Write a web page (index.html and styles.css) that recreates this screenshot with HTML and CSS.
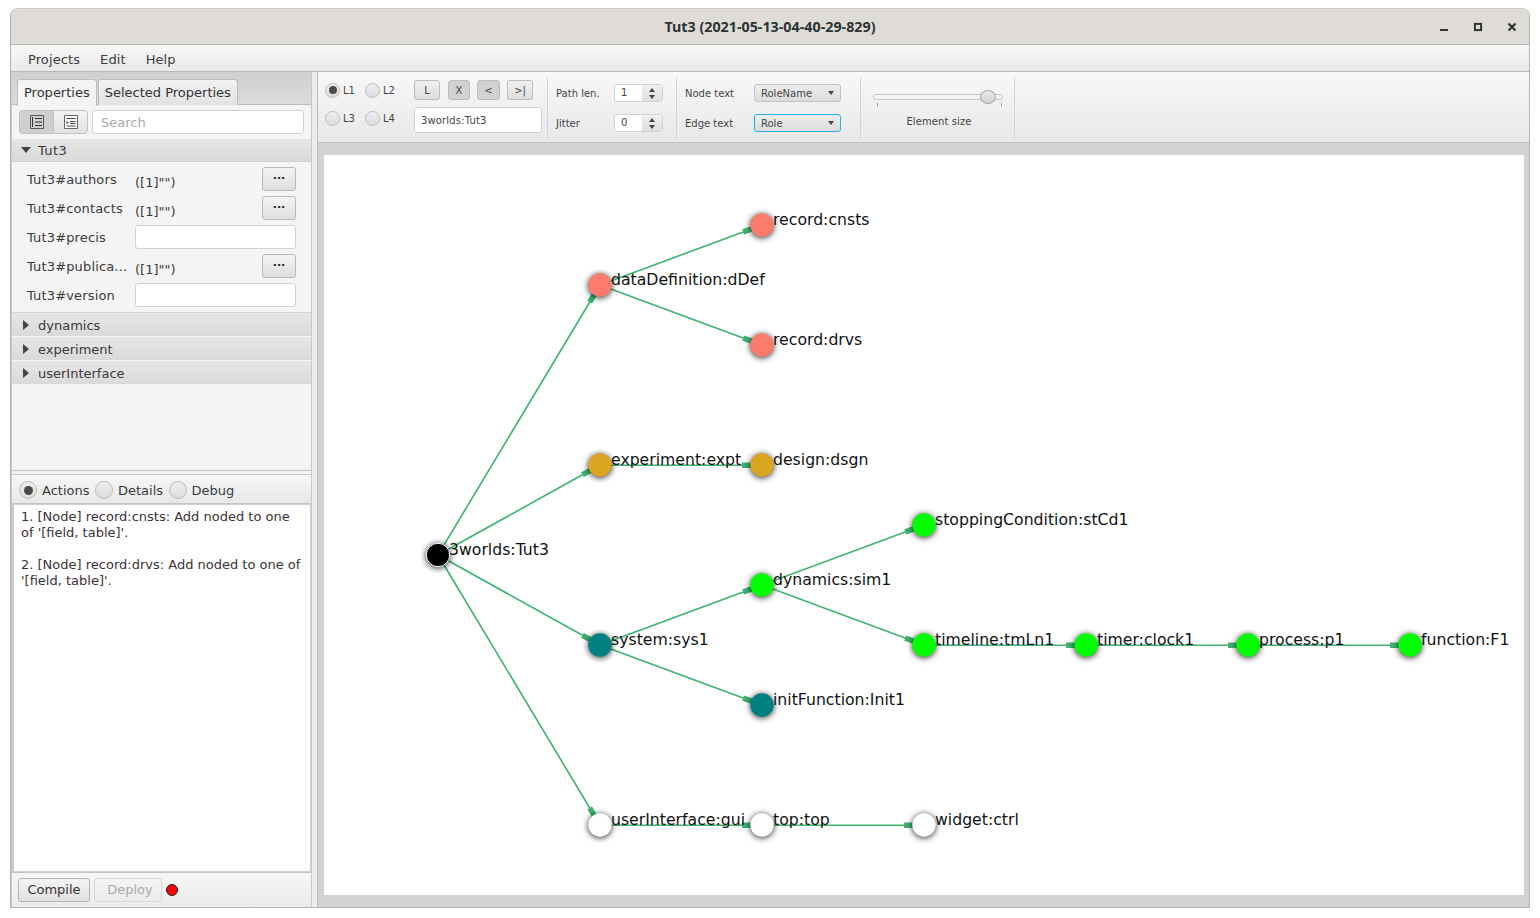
FILE: index.html
```html
<!DOCTYPE html>
<html lang="en">
  <head>
    <meta charset="UTF-8" />
    <title>Tut3</title>
    <link rel="stylesheet" href="styles.css">
  </head>
  <body>
    <div class="window">
      <div class="titlebar">
        <span class="title">Tut3 (2021-05-13-04-40-29-829)</span>
        <div class="win-buttons">
          <svg width="10" height="10" viewBox="0 0 10 10"><rect x="1" y="7" width="8" height="2" fill="#2e3436"/></svg>
          <svg width="10" height="10" viewBox="0 0 10 10"><rect x="1.9" y="1.9" width="6.2" height="6.2" fill="none" stroke="#2e3436" stroke-width="2"/></svg>
          <svg width="10" height="10" viewBox="0 0 10 10"><path d="M1.5 1.5L8.5 8.5M8.5 1.5L1.5 8.5" stroke="#2e3436" stroke-width="2.2"/></svg>
        </div>
      </div>

      <div class="menubar">
        <span>Projects</span>
        <span>Edit</span>
        <span>Help</span>
      </div>

      <div class="main">
        <!-- Left side -->
        <div class="left">
          <div class="top-pane">
            <div class="tabs">
              <div class="tab active">Properties</div>
              <div class="tab">Selected Properties</div>
            </div>
            <div class="sheet-tools">
              <div class="toggle-group">
                <div class="toggle pressed">
                  <svg width="16" height="16" viewBox="0 0 16 16"><path d="M1.500 1.500h13v13h-13z" fill="none" stroke="#555"/><path d="M6 4.500h7M6 8h7M6 11.500h7M3.500 3v10" stroke="#333" fill="none"/></svg>
                </div>
                <div class="toggle">
                  <svg width="16" height="16" viewBox="0 0 16 16"><path d="M1.500 1.500h13v13h-13z" fill="#fff" stroke="#666"/><path d="M3.500 4.500h9M7 7.500h5.500M7 9.500h5.500M3.500 12h9" stroke="#444" fill="none"/><path d="M3.500 7l2.500 1.500-2.500 1.500z" fill="#444"/></svg>
                </div>
              </div>
              <div class="search">Search</div>
            </div>

            <div class="section-head"><span class="arrow-down"></span><span class="section-name">Tut3</span></div>
            <div class="props">
              <div class="prop"><span class="prop-name">Tut3#authors</span><span class="prop-value">([1]"")</span><span class="dots">···</span></div>
              <div class="prop"><span class="prop-name">Tut3#contacts</span><span class="prop-value">([1]"")</span><span class="dots">···</span></div>
              <div class="prop"><span class="prop-name">Tut3#precis</span><span class="prop-input"></span></div>
              <div class="prop"><span class="prop-name">Tut3#publica...</span><span class="prop-value">([1]"")</span><span class="dots">···</span></div>
              <div class="prop"><span class="prop-name">Tut3#version</span><span class="prop-input"></span></div>
            </div>
            <div class="section-head closed"><span class="arrow-right"></span>dynamics</div>
            <div class="section-head closed"><span class="arrow-right"></span>experiment</div>
            <div class="section-head closed"><span class="arrow-right"></span>userInterface</div>
          </div>

          <div class="h-divider"></div>

          <div class="bottom-pane">
            <div class="log-tabs">
              <span class="radio big on"></span><span class="log-label">Actions</span>
              <span class="radio big"></span><span class="log-label">Details</span>
              <span class="radio big"></span><span class="log-label">Debug</span>
            </div>
            <div class="log">
              <p>1. [Node] record:cnsts: Add noded to one of '[field, table]'.</p>
              <p>2. [Node] record:drvs: Add noded to one of '[field, table]'.</p>
            </div>
            <div class="actions">
              <span class="btn">Compile</span>
              <span class="btn disabled">Deploy</span>
              <span class="lamp"></span>
            </div>
          </div>
        </div>

        <div class="v-divider"></div>

        <!-- Right side -->
        <div class="right">
          <div class="toolbar">
            <div class="group group-layout">
              <div class="radios">
                <span class="radio-item"><span class="radio on"></span>L1</span>
                <span class="radio-item"><span class="radio"></span>L2</span>
                <span class="radio-item"><span class="radio"></span>L3</span>
                <span class="radio-item"><span class="radio"></span>L4</span>
              </div>
              <div class="layout-tools">
                <div class="small-btns">
                  <span class="sbtn w26">L</span>
                  <span class="sbtn w22 down">X</span>
                  <span class="sbtn w23 down">&lt;</span>
                  <span class="sbtn w26">&gt;|</span>
                </div>
                <div class="root-field">3worlds:Tut3</div>
              </div>
            </div>
            <div class="group group-spin">
              <div class="field-row"><span class="field-label w58">Path len.</span><span class="spinner"><span class="spin-value">1</span><span class="spin-arrows"><i class="up"></i><i class="dn"></i></span></span></div>
              <div class="field-row"><span class="field-label w58">Jitter</span><span class="spinner"><span class="spin-value">0</span><span class="spin-arrows"><i class="up"></i><i class="dn"></i></span></span></div>
            </div>
            <div class="group group-combo">
              <div class="field-row"><span class="field-label w69">Node text</span><span class="combo">RoleName<i class="dn"></i></span></div>
              <div class="field-row"><span class="field-label w69">Edge text</span><span class="combo focus">Role<i class="dn"></i></span></div>
            </div>
            <div class="group group-slider">
              <div class="slider"><span class="thumb"></span><span class="tick tick-a"></span><span class="tick tick-b"></span></div>
              <div class="slider-label">Element size</div>
            </div>
          </div>

          <div class="canvas-area">
            <svg class="graph" width="1200" height="740" viewBox="324 155 1200 740">
              <g class="edges">
                <path d="M438 555L600 285M600 285L762 225M600 285L762 345M438 555L600 465M600 465.200H762M438 555L600 645M600 645L762 585M762 585L924 525M762 585L924 645M924 645.200H1410M600 645L762 705M438 555L600 825M600 825.200H924"/>
              </g>
              <g class="tips">
                <path d="M594.300 294.400L589.700 302.100M751.700 228.800L743.200 231.900M751.700 341.200L743.200 338.100M590.400 470.300L582.500 474.700M751 465.200H742M590.400 639.700L582.500 635.300M594.300 815.600L589.700 807.900M913.700 528.800L905.200 531.900M751.700 588.800L743.200 591.900M913.700 641.200L905.200 638.100M751.700 701.200L743.200 698.100M1075 645.200H1066M1237 645.200H1228M1399 645.200H1390M751 825.200H742M913 825.200H904"/>
              </g>
              <g class="nodes">
                <circle class="n-root" cx="438" cy="555" r="11.700"/>
                <circle class="n-data" cx="600" cy="285" r="11.700"/>
                <circle class="n-data" cx="762" cy="225" r="11.700"/>
                <circle class="n-data" cx="762" cy="345" r="11.700"/>
                <circle class="n-expt" cx="600" cy="465" r="11.700"/>
                <circle class="n-expt" cx="762" cy="465" r="11.700"/>
                <circle class="n-dyn" cx="924" cy="525" r="11.700"/>
                <circle class="n-dyn" cx="762" cy="585" r="11.700"/>
                <circle class="n-dyn" cx="924" cy="645" r="11.700"/>
                <circle class="n-dyn" cx="1086" cy="645" r="11.700"/>
                <circle class="n-dyn" cx="1248" cy="645" r="11.700"/>
                <circle class="n-dyn" cx="1410" cy="645" r="11.700"/>
                <circle class="n-sys" cx="600" cy="645" r="11.700"/>
                <circle class="n-sys" cx="762" cy="705" r="11.700"/>
                <circle class="n-ui" cx="600" cy="825" r="11.700"/>
                <circle class="n-ui" cx="762" cy="825" r="11.700"/>
                <circle class="n-ui" cx="924" cy="825" r="11.700"/>
              </g>
              <g class="labels">
                <text x="449" y="555">3worlds:Tut3</text>
                <text x="611" y="285">dataDefinition:dDef</text>
                <text x="773" y="225">record:cnsts</text>
                <text x="773" y="345">record:drvs</text>
                <text x="611" y="465">experiment:expt</text>
                <text x="773" y="465">design:dsgn</text>
                <text x="935" y="525">stoppingCondition:stCd1</text>
                <text x="773" y="585">dynamics:sim1</text>
                <text x="935" y="645">timeline:tmLn1</text>
                <text x="1097" y="645">timer:clock1</text>
                <text x="1259" y="645">process:p1</text>
                <text x="1421" y="645">function:F1</text>
                <text x="611" y="645">system:sys1</text>
                <text x="773" y="705">initFunction:Init1</text>
                <text x="611" y="825">userInterface:gui</text>
                <text x="773" y="825">top:top</text>
                <text x="935" y="825">widget:ctrl</text>
              </g>
            </svg>
          </div>
        </div>
      </div>
    </div>
  </body>
</html>
```

FILE: styles.css
```css
* {
  box-sizing: border-box;
}
html,
body {
  margin: 0;
  height: 100%;
  background: #fff;
}
body {
  padding: 8px 10px 0;
  font-family: "DejaVu Sans", sans-serif;
  font-size: 13px;
  color: #333;
  overflow: hidden;
}
.window {
  width: 1520px;
  height: 900px;
  display: flex;
  flex-direction: column;
  border: 1px solid #b4b4b2;
  border-top-color: #c9c9c7;
  border-radius: 8px 8px 0 0;
  overflow: hidden;
}

/* Title bar and menu */
.titlebar {
  flex: none;
  height: 36px;
  position: relative;
  display: flex;
  align-items: center;
  justify-content: center;
  background: #dfdcd8;
  border-bottom: 1px solid #b8b5b1;
}
.title {
  font-family: "Noto Sans", sans-serif;
  font-size: 14.300px;
  font-weight: bold;
  color: #2e3436;
}
.win-buttons {
  position: absolute;
  right: 12px;
  top: 13px;
  display: flex;
  gap: 24px;
}
.menubar {
  flex: none;
  height: 27px;
  display: flex;
  align-items: center;
  gap: 20px;
  padding: 2px 0 0 17px;
  background: linear-gradient(#f8f8f8, #e9e9e9);
  border-bottom: 1px solid #b5b5b5;
  color: #3a3a3a;
}
.menubar span {
  letter-spacing: 0.1px;
}
.main {
  flex: 1;
  display: flex;
  min-height: 0;
  background: #d3d3d3;
}

/* Left side */
.left {
  flex: none;
  width: 300px;
  padding-left: 1px;
  display: flex;
  flex-direction: column;
  background: #c8c8c8;
}
.top-pane {
  flex: none;
  height: 398px;
  background: #f4f4f4;
}
.tabs {
  height: 33px;
  display: flex;
  gap: 1px;
  padding: 7px 0 0 5px;
  background: linear-gradient(#cfcfcf, #dcdcdc);
  border-bottom: 1px solid #bcbcbc;
}
.tab {
  height: 26px;
  padding: 5px 6px 0;
  border: 1px solid #bdbdbd;
  border-bottom: none;
  border-radius: 3px 3px 0 0;
  background: linear-gradient(#f2f2f2, #e2e2e2);
  color: #333;
}
.tab.active {
  height: 27px;
  background: #f4f4f4;
}
.sheet-tools {
  height: 34px;
  display: flex;
  align-items: center;
  gap: 4px;
  padding: 0 7px;
}
.toggle-group {
  display: flex;
}
.toggle {
  width: 35px;
  height: 24px;
  display: flex;
  align-items: center;
  justify-content: center;
  background: linear-gradient(#f4f4f4, #e2e2e2);
  border: 1px solid #c2c2c2;
  border-radius: 0 4px 4px 0;
}
.toggle.pressed {
  width: 34px;
  background: #cfcfcf;
  border-right: none;
  border-radius: 4px 0 0 4px;
}
.search {
  width: 212px;
  height: 24px;
  padding: 4px 8px;
  background: #fff;
  border: 1px solid #d2d2d2;
  border-radius: 3px;
  color: #a8a8a8;
}
.section-head {
  height: 23px;
  display: flex;
  align-items: center;
  background: linear-gradient(#e6e6e6, #dadada);
  border-bottom: 1px solid #d0d0d0;
  color: #3a3a3a;
}
.section-head.closed {
  height: 24px;
  padding-top: 1px;
  border-bottom: 1px solid #f4f4f4;
}
.section-name {
  letter-spacing: 0.4px;
}
.arrow-down {
  width: 0;
  height: 0;
  margin: 0 7px 0 9px;
  border-left: 5px solid transparent;
  border-right: 5px solid transparent;
  border-top: 6px solid #444;
}
.arrow-right {
  width: 0;
  height: 0;
  margin: 0 9px 0 11px;
  border-top: 5px solid transparent;
  border-bottom: 5px solid transparent;
  border-left: 6px solid #444;
}
.props {
  height: 151px;
  padding: 5px 15px 0;
  border-bottom: 1px solid #d4d4d4;
}
.prop {
  height: 24px;
  margin-bottom: 5px;
  display: flex;
  align-items: center;
  color: #3a3a3a;
}
.prop-name {
  width: 108px;
  flex: none;
  letter-spacing: 0.15px;
}
.prop-value {
  flex: 1;
  margin-top: 6px;
}
.prop-input {
  width: 161px;
  height: 24px;
  background: #fff;
  border: 1px solid #d2d2d2;
  border-radius: 3px;
}
.dots {
  width: 34px;
  height: 24px;
  text-align: center;
  font-size: 11px;
  line-height: 22px;
  font-weight: bold;
  color: #222;
  background: linear-gradient(#f4f4f4, #dedede);
  border: 1px solid #b9b9b9;
  border-radius: 3px;
}
.h-divider {
  flex: none;
  height: 5px;
  background: #f2f2f2;
  border-top: 1px solid #c6c6c6;
  border-bottom: 1px solid #c6c6c6;
}
.bottom-pane {
  flex: 1;
  display: flex;
  flex-direction: column;
  min-height: 0;
}
.log-tabs {
  flex: none;
  height: 29px;
  display: flex;
  align-items: center;
  padding: 2px 0 0 7px;
  background: linear-gradient(#f6f6f6, #e8e8e8);
  border-bottom: 1px solid #c4c4c4;
  color: #3a3a3a;
}
.log-label {
  margin: 0 5.500px 0 5px;
}
.radio {
  display: inline-block;
  flex: none;
  width: 15px;
  height: 15px;
  position: relative;
  border: 1px solid #bcbcbc;
  border-radius: 50%;
  background: linear-gradient(#eee, #dcdcdc);
}
.radio.big {
  width: 18px;
  height: 18px;
}
.radio.on::after {
  content: "";
  position: absolute;
  inset: 2.500px;
  border-radius: 50%;
  background: #4a4a4a;
}
.radio.big.on::after {
  inset: 3.500px;
}
.log {
  flex: 1;
  margin: 0 0 0 1px;
  padding: 4px 8px 5px 7px;
  background: #fff;
  border: 1px solid #d0d0d0;
  line-height: 16px;
  color: #3b3232;
}
.log p {
  margin: 0 0 16px;
}
.actions {
  flex: none;
  height: 35px;
  display: flex;
  align-items: center;
  gap: 4px;
  padding-left: 6px;
  background: linear-gradient(#f6f6f6, #ebebeb);
  border-top: 1px solid #c4c4c4;
}
.btn {
  width: 72px;
  height: 24px;
  padding-top: 3px;
  text-align: center;
  background: linear-gradient(#f4f4f4, #e0e0e0);
  border: 1px solid #b5b5b5;
  border-radius: 3px;
  color: #333;
}
.btn.disabled {
  width: 68px;
  padding-left: 4px;
  color: #aaa;
  border-color: #d8d8d8;
  background: linear-gradient(#f4f4f4, #ebebeb);
}
.lamp {
  width: 12px;
  height: 12px;
  border-radius: 50%;
  background: #f00;
  border: 1px solid #222;
}
.v-divider {
  flex: none;
  width: 7px;
  background: #ececec;
  border-left: 1px solid #c8c8c8;
  border-right: 1px solid #bcbcbc;
}

/* Right side */
.right {
  flex: 1;
  display: flex;
  flex-direction: column;
  min-width: 0;
}
.toolbar {
  flex: none;
  height: 71px;
  display: flex;
  padding: 5px 0 3px;
  background: linear-gradient(#f8f8f8, #e8e8e8);
  border-bottom: 1px solid #c2c2c2;
  font-size: 10px;
  color: #444;
}
.group {
  flex: none;
  border-right: 1px solid #d4d4d4;
}
.group-layout {
  width: 230px;
  display: flex;
  padding: 5px 0 0 7px;
}
.radios {
  width: 89px;
  display: grid;
  grid-template-columns: 40px 49px;
  grid-auto-rows: 28px;
}
.radio-item {
  height: 16px;
  display: flex;
  align-items: center;
  gap: 3px;
}
.layout-tools {
  display: flex;
  flex-direction: column;
  gap: 7px;
  margin-top: -2px;
}
.small-btns {
  display: flex;
  gap: 7px;
}
.sbtn {
  height: 20px;
  text-align: center;
  line-height: 19px;
  background: linear-gradient(#f0f0f0, #dedede);
  border: 1px solid #bcbcbc;
  border-radius: 3px;
}
.sbtn.down {
  background: linear-gradient(#cfcfcf, #d4d4d4);
}
.w26 {
  width: 26px;
}
.w22 {
  width: 22px;
  margin-left: 1px;
}
.w23 {
  width: 23px;
}
.root-field {
  width: 128px;
  height: 26px;
  padding: 7px 6px 0;
  letter-spacing: 0.15px;
  background: #fff;
  border: 1px solid #d2d2d2;
  border-radius: 3px;
}
.group-spin {
  width: 129px;
  padding: 7px 0 0 8px;
}
.group-combo {
  width: 184px;
  padding: 7px 0 0 8px;
}
.field-row {
  height: 18px;
  margin-bottom: 12px;
  display: flex;
  align-items: center;
}
.field-label {
  flex: none;
}
.w58 {
  width: 58px;
}
.w69 {
  width: 69px;
}
.spinner {
  width: 49px;
  height: 18px;
  display: flex;
  background: #fff;
  border: 1px solid #d2d2d2;
  border-radius: 3px;
}
.spin-value {
  flex: 1;
  padding: 2px 0 0 6px;
}
.spin-arrows {
  width: 20px;
  display: flex;
  flex-direction: column;
  align-items: center;
  justify-content: center;
  gap: 3px;
  background: linear-gradient(#f0f0f0, #dedede);
  border-radius: 0 3px 3px 0;
}
.up {
  width: 0;
  height: 0;
  border-left: 3.500px solid transparent;
  border-right: 3.500px solid transparent;
  border-bottom: 4px solid #444;
}
.dn {
  width: 0;
  height: 0;
  border-left: 3.500px solid transparent;
  border-right: 3.500px solid transparent;
  border-top: 4px solid #444;
}
.combo {
  width: 87px;
  height: 18px;
  display: flex;
  align-items: center;
  justify-content: space-between;
  padding: 0 6px;
  background: linear-gradient(#eeeeee, #dcdcdc);
  border: 1px solid #c2c2c2;
  border-radius: 3px;
}
.combo.focus {
  border-color: #2ab0e6;
}
.group-slider {
  width: 154px;
  padding-top: 12px;
}
.slider {
  position: relative;
  width: 130px;
  height: 6px;
  margin: 5px 0 0 12px;
  background: #f4f4f4;
  border: 1px solid #c8c8c8;
  border-radius: 3px;
}
.thumb {
  position: absolute;
  left: 106px;
  top: -5px;
  width: 16px;
  height: 14px;
  border-radius: 50%;
  background: linear-gradient(#eaeaea, #d2d2d2);
  border: 1px solid #a8a8a8;
}
.tick {
  position: absolute;
  top: 8px;
  width: 1px;
  height: 4px;
  background: #aaa;
}
.tick-a {
  left: 3px;
}
.tick-b {
  left: 127px;
}
.slider-label {
  margin-top: 16px;
  text-align: center;
  letter-spacing: 0.1px;
  padding-left: 3px;
}
.canvas-area {
  flex: 1;
  padding: 12px 0 0 6px;
  background: #d3d3d3;
}

/* Graph */
.graph {
  display: block;
  background: #fff;
}
.edges path {
  fill: none;
  stroke: #3cb371;
  stroke-width: 1.600;
}
.tips path {
  fill: none;
  stroke: #3cb371;
  stroke-width: 5.500;
}
.nodes circle {
  filter: drop-shadow(0 1px 3px rgba(0, 0, 0, 0.85));
}
.n-root {
  fill: #000;
  stroke: #fff;
  stroke-width: 1;
}
.n-data {
  fill: #fc7b6c;
}
.n-expt {
  fill: #daa520;
}
.n-dyn {
  fill: #00ff00;
}
.n-sys {
  fill: #008080;
}
.n-ui {
  fill: #fff;
}
.labels text {
  font-size: 15.700px;
  fill: #111;
}
```
